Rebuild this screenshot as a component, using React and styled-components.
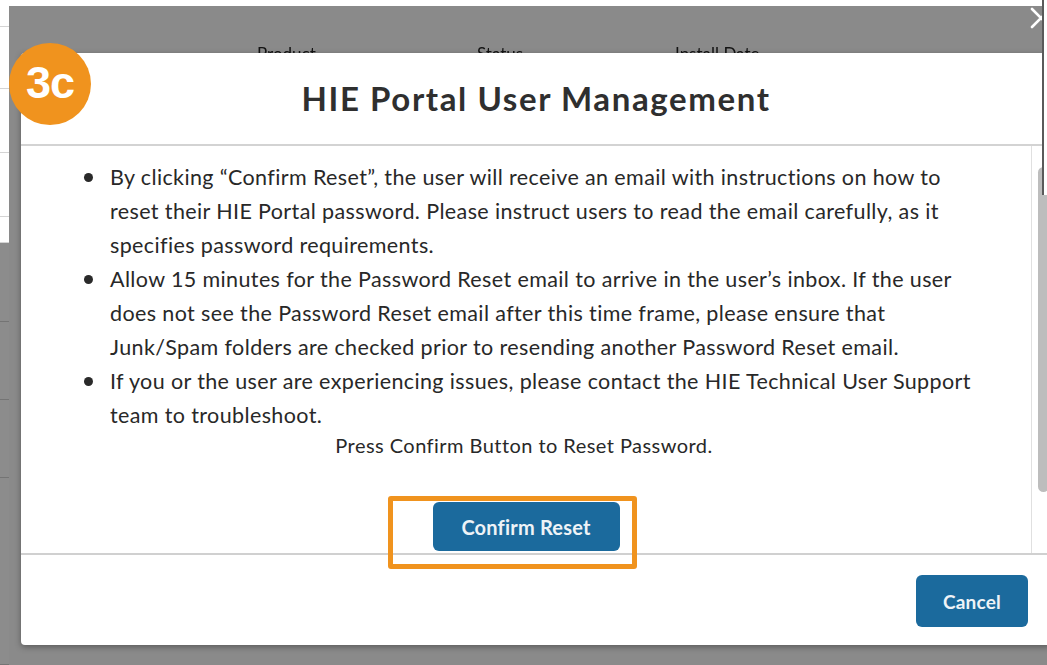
import React from "react";
import styled, { createGlobalStyle } from "styled-components";

const GlobalStyle = createGlobalStyle`
  * { box-sizing: border-box; }
  html, body {
    margin: 0;
    padding: 0;
    width: 1047px;
    height: 665px;
    overflow: hidden;
    background: #ffffff;
  }
  #root { width: 1047px; height: 665px; }
`;

const Screen = styled.div`
  position: relative;
  width: 1047px;
  height: 665px;
  overflow: hidden;
  background: #ffffff;
  font-family: Lato, "Open Sans", "Liberation Sans", sans-serif;
`;

/* ---------- page underneath the dialog ---------- */
const Page = styled.div`
  display: grid;
  grid-template-columns: 9px 1fr;
  height: 100%;
`;

const Rail = styled.div`
  display: flex;
  flex-direction: column;
`;

const RailRow = styled.div`
  height: ${(p) => p.$h}px;
  flex: ${(p) => (p.$fill ? 1 : "none")};
  background: ${(p) => (p.$dark ? "#8c8c8c" : "#ffffff")};
  border-bottom: 1px solid ${(p) => (p.$dark ? "#747474" : "#d4d4d4")};
`;

const PageMain = styled.div`
  padding-top: 43px;
`;

const TableHead = styled.div`
  display: grid;
  grid-template-columns: 248px 220px 198px 1fr;
  font-size: 17px;
  color: #262626;
  filter: blur(0.6px);
`;

const HeadCell = styled.span`
  grid-column: ${(p) => p.$col};
`;

/* ---------- overlay and dialog ---------- */
const Backdrop = styled.div`
  position: absolute;
  left: 9px;
  top: 6px;
  right: 0;
  bottom: 0;
  background: rgba(0, 0, 0, 0.46);
`;

const Modal = styled.section`
  position: absolute;
  left: 21px;
  top: 53px;
  width: 1030px;
  height: 592px;
  background: #ffffff;
  border-radius: 4px;
  box-shadow: 0 2px 6px rgba(0, 0, 0, 0.35);
  display: flex;
  flex-direction: column;
  overflow: hidden;
`;

const Header = styled.header`
  height: 93px;
  flex: none;
  display: flex;
  align-items: center;
  justify-content: center;
  border-bottom: 2px solid #d3d3d3;
`;

const Title = styled.h2`
  margin: 0;
  font-family: Lato, "Open Sans", sans-serif;
  font-size: 33px;
  font-weight: 700;
  color: #2f2f2f;
  letter-spacing: 1.6px;
  transform: translate(0px, -1px);
`;

const Body = styled.div`
  height: 409px;
  flex: none;
  display: grid;
  grid-template-columns: 1fr 20px;
  border-bottom: 2px solid #d0d0d0;
  overflow: hidden;
`;

const Content = styled.div`
  padding-top: 14px;
  display: flex;
  flex-direction: column;
  align-items: stretch;
  color: #282828;
  line-height: 34px;
`;

const List = styled.ul`
  list-style: none;
  margin: 0;
  padding: 0 0 0 89px;
  font-size: 21.5px;
  letter-spacing: 0.38px;
  white-space: nowrap;
`;

const Item = styled.li`
  position: relative;
  &::before {
    content: "";
    position: absolute;
    left: -26px;
    top: 13px;
    width: 9px;
    height: 9px;
    border-radius: 50%;
    background: #2a2a2a;
  }
`;

const Notice = styled.p`
  margin: -4px 0 0;
  text-align: center;
  font-size: 20px;
  letter-spacing: 0.45px;
  transform: translateX(-2px);
`;

const ActionRow = styled.div`
  display: flex;
  justify-content: center;
  padding-top: 40px;
`;

const Button = styled.button`
  height: ${(p) => p.$h}px;
  width: ${(p) => p.$w}px;
  border: none;
  border-radius: 6px;
  background: #1b6a9d;
  color: #eef3f7;
  font-family: Lato, "Open Sans", sans-serif;
  font-size: ${(p) => p.$fs}px;
  font-weight: 700;
  letter-spacing: 0.2px;
  padding: 0;
  cursor: pointer;
`;

const ScrollTrack = styled.div`
  border-left: 1px solid #e0e0e0;
  padding: 21px 2px 0 6px;
`;

const ScrollThumb = styled.div`
  width: 11px;
  height: 325px;
  border-radius: 6px;
  background: #bdbdbd;
`;

const Footer = styled.footer`
  flex: 1;
  display: flex;
  justify-content: flex-end;
  align-items: flex-start;
  padding: 20px 23px 0 0;
`;

/* ---------- callout marks laid over the screen ---------- */
const StepBadge = styled.div`
  position: absolute;
  left: 9px;
  top: 43px;
  width: 82px;
  height: 82px;
  border-radius: 50%;
  background: #f0931e;
  color: #ffffff;
  display: flex;
  align-items: center;
  justify-content: center;
  font-family: "Liberation Sans", Arial, sans-serif;
  font-weight: 700;
  font-size: 45px;
  letter-spacing: -1px;
  padding-bottom: 2px;
`;

const Highlight = styled.div`
  position: absolute;
  left: 388px;
  top: 496px;
  width: 249px;
  height: 73px;
  border: 5px solid #f0931e;
  border-radius: 3px;
`;

const CloseIcon = styled.svg`
  position: absolute;
  right: -6px;
  top: 6px;
`;

const EdgeStrip = styled.div`
  position: absolute;
  right: 0;
  top: 0;
  width: 5px;
  height: 195px;
  background: #ffffff;
  border-left: 2px solid #5a5a5a;
`;

const notes = [
  [
    "By clicking “Confirm Reset”, the user will receive an email with instructions on how to",
    "reset their HIE Portal password. Please instruct users to read the email carefully, as it",
    "specifies password requirements.",
  ],
  [
    "Allow 15 minutes for the Password Reset email to arrive in the user’s inbox. If the user",
    "does not see the Password Reset email after this time frame, please ensure that",
    "Junk/Spam folders are checked prior to resending another Password Reset email.",
  ],
  [
    "If you or the user are experiencing issues, please contact the HIE Technical User Support",
    "team to troubleshoot.",
  ],
];

export default function App() {
  return (
    <Screen>
      <GlobalStyle />
      <Page>
        <Rail>
          <RailRow $h={27} />
          <RailRow $h={62} />
          <RailRow $h={64} />
          <RailRow $h={64} />
          <RailRow $h={26} />
          <RailRow $h={79} $dark />
          <RailRow $h={78} $dark />
          <RailRow $h={78} $dark />
          <RailRow $fill $dark />
        </Rail>
        <PageMain>
          <TableHead>
            <HeadCell $col={2}>Product</HeadCell>
            <HeadCell $col={3}>Status</HeadCell>
            <HeadCell $col={4}>Install Date</HeadCell>
          </TableHead>
        </PageMain>
      </Page>

      <Backdrop />

      <CloseIcon width="24" height="24" viewBox="0 0 24 24" fill="none">
        <path d="M3 3 L21 21 M21 3 L3 21" stroke="#ffffff" strokeWidth="2.6" strokeLinecap="round" />
      </CloseIcon>

      <Modal>
        <Header>
          <Title>HIE Portal User Management</Title>
        </Header>
        <Body>
          <Content>
            <List>
              {notes.map((lines, i) => (
                <Item key={i}>
                  {lines.map((line, j) => (
                    <React.Fragment key={j}>
                      {j > 0 && <br />}
                      {line}
                    </React.Fragment>
                  ))}
                </Item>
              ))}
            </List>
            <Notice>Press Confirm Button to Reset Password.</Notice>
            <ActionRow>
              <Button $w={187} $h={49} $fs={20}>Confirm Reset</Button>
            </ActionRow>
          </Content>
          <ScrollTrack>
            <ScrollThumb />
          </ScrollTrack>
        </Body>
        <Footer>
          <Button $w={112} $h={52} $fs={19}>Cancel</Button>
        </Footer>
      </Modal>

      <EdgeStrip />
      <StepBadge>3c</StepBadge>
      <Highlight />
    </Screen>
  );
}
